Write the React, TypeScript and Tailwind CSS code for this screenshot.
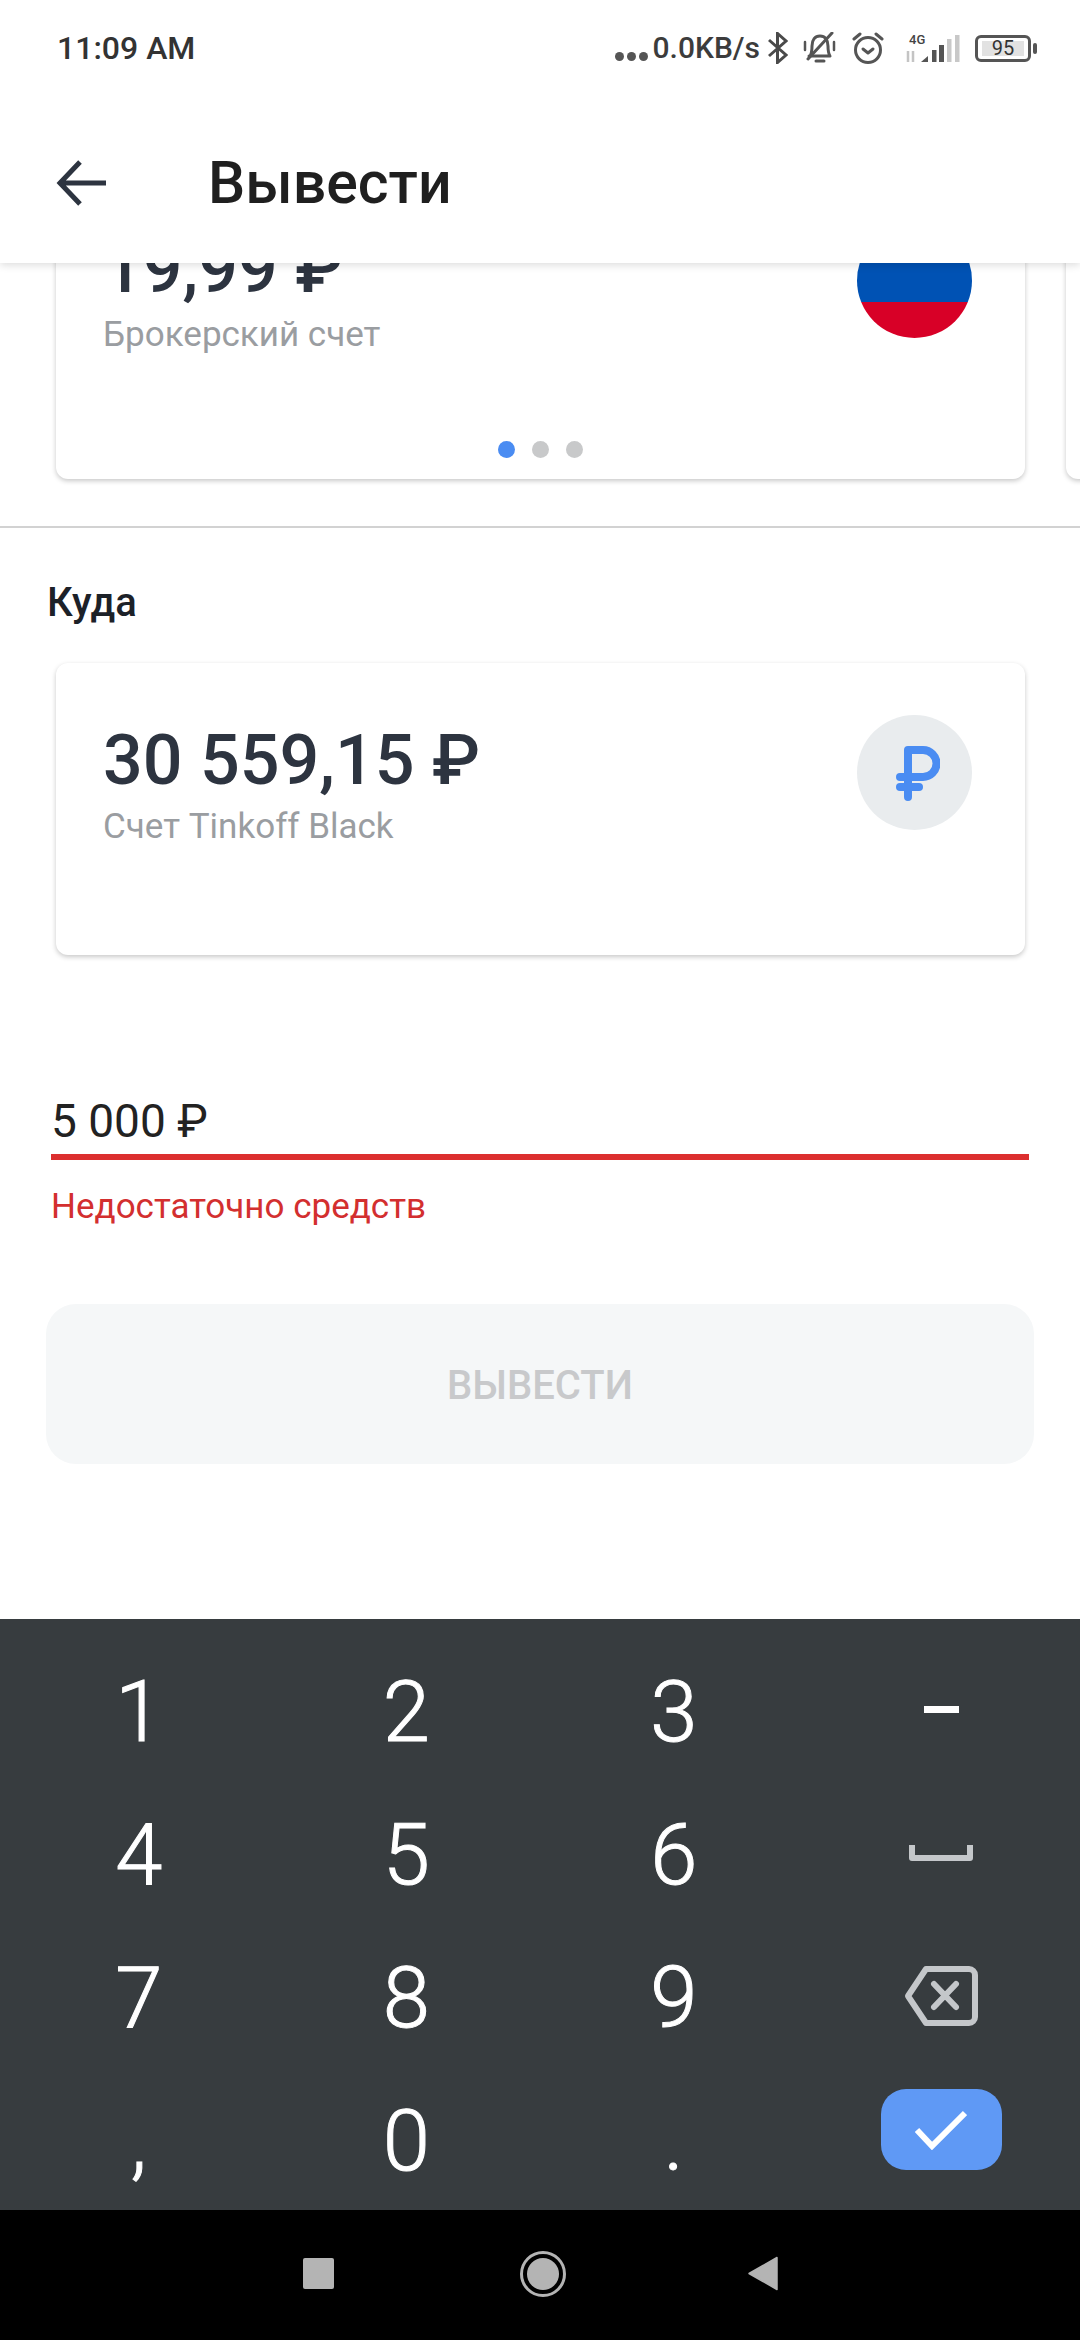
import React from "react";

function RubleGlyph() {
  return (
    <svg className="ml-[6px]" width="44" height="56" viewBox="0 0 44 56" fill="none" stroke="#4a8cf2" strokeWidth="8" strokeLinecap="round">
      <path d="M12 52V5H27a12.5 12.5 0 0 1 0 27H4" strokeLinejoin="round" />
      <path d="M4 42H23" />
    </svg>
  );
}

function Card({ amount, label, icon, dots }: { amount: string; label: string; icon: React.ReactNode; dots?: boolean }) {
  return (
    <div className={`relative w-[969px] shrink-0 rounded-[12px] bg-white shadow-[0_2px_5px_rgba(0,0,0,0.22)] ${dots ? "h-[308px]" : "h-[292px]"}`}>
      <div className="flex items-start justify-between pl-[47px] pr-[53px] pt-[56px]">
        <div>
          <div className="text-[70px] leading-[82px] font-medium text-[#2d3440]">{amount}</div>
          <div className="mt-[6px] text-[35px] leading-[40px] text-[#9a9da1]">{label}</div>
        </div>
        <div className="mt-[-4px]">{icon}</div>
      </div>
      {dots && (
        <div className="absolute left-0 right-0 bottom-[21px] flex justify-center gap-[17px]">
          <span className="h-[17px] w-[17px] rounded-full bg-[#4a8cf2]" />
          <span className="h-[17px] w-[17px] rounded-full bg-[#c8c9ca]" />
          <span className="h-[17px] w-[17px] rounded-full bg-[#c8c9ca]" />
        </div>
      )}
    </div>
  );
}

function StatusIcons() {
  return (
    <div className="flex items-center">
      <div className="mt-[16px] flex items-center gap-[3px]">
        <span className="h-[9px] w-[9px] rounded-full bg-[#555]" />
        <span className="h-[9px] w-[9px] rounded-full bg-[#555]" />
        <span className="h-[9px] w-[9px] rounded-full bg-[#555]" />
      </div>
      <span className="ml-[5px] text-[30px] leading-[34px] font-medium text-[#3c3c3c]">0.0KB/s</span>
      <svg className="ml-[8px]" width="20" height="32" viewBox="0 0 20 32" fill="none" stroke="#4a4a4a" strokeWidth="3">
        <path d="M1 8L18 23L9.5 30.5V1.5L18 9L1 24" />
      </svg>
      <svg className="ml-[15px]" width="33" height="32" viewBox="0 0 33 32" fill="none" stroke="#555" strokeWidth="3" strokeLinecap="round" strokeLinejoin="round">
        <path d="M7 24C9 21 9 18 9 14C9 8 12 4 17 4C22 4 25 8 25 14C25 18 25 21 27 24H6" />
        <path d="M13 29H21" />
        <path d="M29 1L5 27" />
        <path d="M2 10V18M31 10V18" strokeWidth="2.5" />
      </svg>
      <svg className="ml-[16px]" width="32" height="32" viewBox="0 0 32 32" fill="none" stroke="#555" strokeWidth="3" strokeLinecap="round" strokeLinejoin="round">
        <circle cx="16" cy="18" r="12.5" />
        <path d="M11 17L16 21L21 17" />
        <path d="M2 7L8 2M30 7L24 2" />
      </svg>
      <svg className="ml-[21px]" width="55" height="32" viewBox="0 0 55 32">
        <text x="4" y="12" fontFamily="Roboto, sans-serif" fontSize="13" fontWeight="500" fill="#444">4G</text>
        <path d="M3 19V30M8 19V30" stroke="#c4c4c4" strokeWidth="2.5" />
        <path d="M16 30L23 24V30Z" fill="#555" />
        <rect x="27" y="18" width="4.5" height="12" fill="#555" />
        <rect x="34" y="13" width="5" height="17" fill="#555" />
        <rect x="42" y="7" width="4.5" height="23" fill="#c8c8c8" />
        <rect x="50" y="3" width="4.5" height="27" fill="#c8c8c8" />
      </svg>
      <div className="ml-[15px] flex items-center">
        <div className="flex h-[27px] w-[56px] items-center justify-center rounded-[6px] border-[3px] border-[#555]">
          <span className="flex h-[15px] w-[42px] items-center justify-center bg-[#e2e2e2] text-[20px] leading-[15px] text-[#333]">95</span>
        </div>
        <span className="ml-[2px] h-[11px] w-[4px] rounded-[2px] bg-[#555]" />
      </div>
    </div>
  );
}

const keys = ["1", "2", "3", "-", "4", "5", "6", "space", "7", "8", "9", "back", ",", "0", ".", "ok"];

function Key({ k }: { k: string }) {
  let inner: React.ReactNode = (
    <span className="mt-[6px] text-[85px] leading-[137px] font-light text-white [-webkit-text-stroke:1px_#ffffff]">{k}</span>
  );
  if (k === "-") inner = <span className="h-[7px] w-[35px] bg-white" />;
  if (k === "space")
    inner = (
      <svg width="66" height="18" viewBox="0 0 66 18" fill="none" stroke="#c4c7ca" strokeWidth="6" strokeLinejoin="round">
        <path d="M4 1V14H62V1" />
      </svg>
    );
  if (k === "back")
    inner = (
      <svg width="74" height="60" viewBox="0 0 74 60" fill="none" stroke="#c4c7ca" strokeWidth="6" strokeLinejoin="round" strokeLinecap="round">
        <path d="M22 3H65A6 6 0 0 1 71 9V51A6 6 0 0 1 65 57H22L4 30Z" />
        <path d="M30 18L52 41M52 18L30 41" />
      </svg>
    );
  if (k === "ok")
    inner = (
      <div className="mb-[18px] flex h-[81px] w-[121px] items-center justify-center rounded-[25px] bg-[#5f99f5]">
        <svg width="52" height="40" viewBox="0 0 52 40" fill="none" stroke="#fff" strokeWidth="6">
          <path d="M2 20L17 36L50 3" />
        </svg>
      </div>
    );
  return <div className="flex h-[143px] items-center justify-center">{inner}</div>;
}

export default function App() {
  return (
    <div className="flex h-[2340px] w-[1080px] flex-col overflow-hidden bg-white font-['Roboto',sans-serif]">
      <header className="relative z-10 h-[263px] shrink-0 bg-white shadow-[0_2px_8px_rgba(0,0,0,0.14)]">
        <div className="flex h-[96px] items-center justify-between pl-[57px] pr-[43px]">
          <span className="text-[32px] leading-[36px] font-medium text-[#333]">11:09 AM</span>
          <StatusIcons />
        </div>
        <div className="flex items-center pl-[56px] pt-[55px]">
          <svg width="50" height="46" viewBox="0 0 50 46" fill="none" stroke="#2d3440" strokeWidth="5">
            <path d="M24 2L4 23L24 44M4 23H50" />
          </svg>
          <h1 className="ml-[102px] text-[59px] leading-[64px] font-medium text-[#1f1f1f]">Вывести</h1>
        </div>
      </header>

      <main className="relative flex-1 overflow-hidden">
        <div className="-mt-[92px] flex gap-[41px] pl-[56px]">
          <Card
            dots
            amount="19,99 ₽"
            label="Брокерский счет"
            icon={
              <div className="flex h-[115px] w-[115px] flex-col overflow-hidden rounded-full">
                <div className="h-[79px] bg-[#0052b4]" />
                <div className="h-[36px] bg-[#d80027]" />
              </div>
            }
          />
          <div className="h-[308px] w-[969px] shrink-0 rounded-[12px] bg-white shadow-[0_2px_5px_rgba(0,0,0,0.22)]" />
        </div>

        <div className="mt-[47px] h-[2px] bg-[#d2d2d2]" />

        <h2 className="ml-[47px] mt-[53px] text-[40px] leading-[44px] font-medium text-[#1c2128]">Куда</h2>

        <div className="ml-[56px] mt-[38px]">
          <Card
            amount="30 559,15 ₽"
            label="Счет Tinkoff Black"
            icon={
              <div className="flex h-[115px] w-[115px] items-center justify-center rounded-full bg-[#e9ecee]">
                <RubleGlyph />
              </div>
            }
          />
        </div>

        <div className="mx-[51px] mt-[139px]">
          <div className="text-[46px] leading-[54px] text-[#222]">5 000 ₽</div>
          <div className="mt-[6px] h-[6px] bg-[#dc2f2f]" />
          <div className="mt-[27px] text-[35px] leading-[40px] text-[#d32f2f]">Недостаточно средств</div>
        </div>

        <button className="mx-[46px] mt-[77px] flex h-[160px] w-[988px] items-center justify-center rounded-[30px] bg-[#f5f7f8] pt-[3px] text-[40px] font-medium text-[#c8c9cb]">
          ВЫВЕСТИ
        </button>
      </main>

      <section className="grid h-[591px] shrink-0 grid-cols-4 bg-[#373c3f] px-[5px] pt-[19px]">
        {keys.map((k) => (
          <Key key={k} k={k} />
        ))}
      </section>

      <nav className="flex h-[130px] shrink-0 items-center bg-black pb-[3px]">
        <span className="ml-[303px] h-[31px] w-[31px] rounded-[2px] bg-[#b4b4b4]" />
        <span className="ml-[186px] flex h-[46px] w-[46px] items-center justify-center rounded-full border-[3px] border-[#b4b4b4]">
          <span className="h-[32px] w-[32px] rounded-full bg-[#b4b4b4]" />
        </span>
        <svg className="ml-[182px]" width="31" height="35" viewBox="0 0 31 35">
          <path d="M29 1.5V33.5L1 17.5Z" fill="#b4b4b4" stroke="#b4b4b4" strokeWidth="1.5" strokeLinejoin="round" />
        </svg>
      </nav>
    </div>
  );
}
